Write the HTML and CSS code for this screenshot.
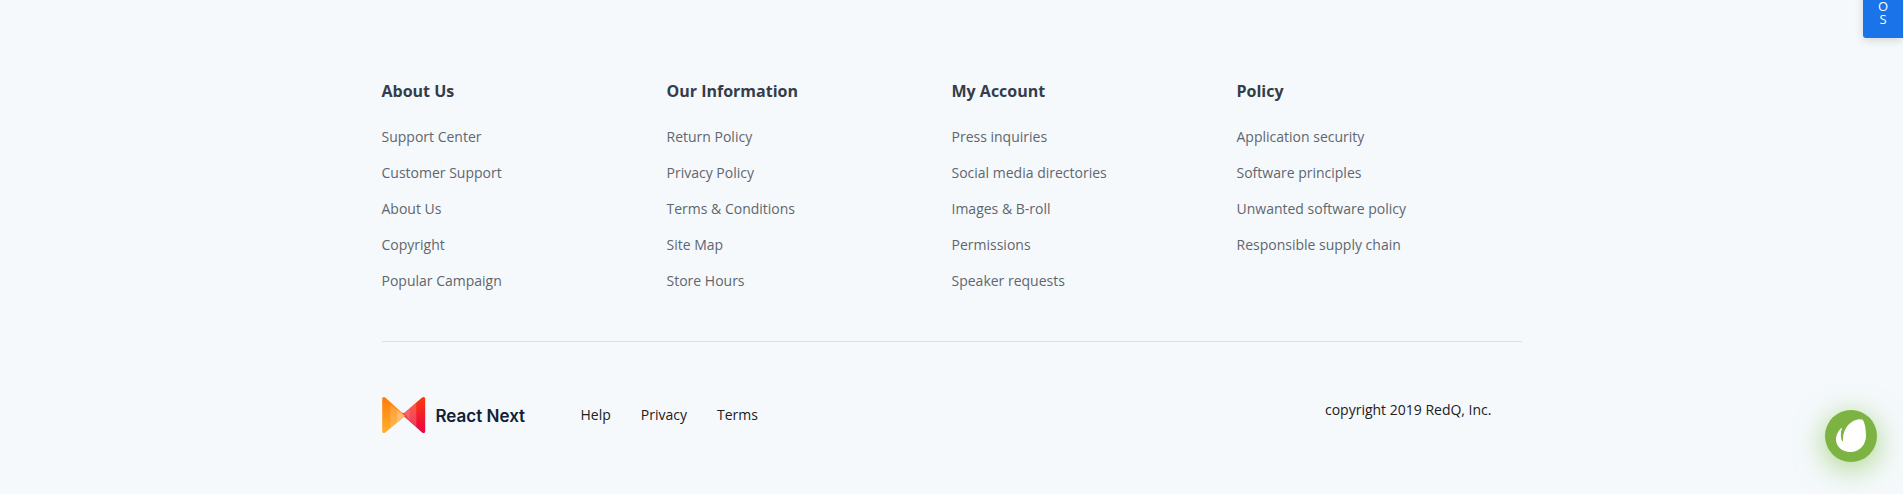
FILE: index.html
```html
<!DOCTYPE html>
<html lang="en">
<head>
<meta charset="utf-8">
<title>React Next</title>
<link rel="stylesheet" href="styles.css">
</head>
<body>
<footer class="footer">
  <div class="columns">
    <section class="column">
      <h3 class="title">About Us</h3>
      <ul class="links"><li>Support Center</li><li>Customer Support</li><li>About Us</li><li>Copyright</li><li>Popular Campaign</li></ul>
    </section>
    <section class="column">
      <h3 class="title">Our Information</h3>
      <ul class="links"><li>Return Policy</li><li>Privacy Policy</li><li>Terms &amp; Conditions</li><li>Site Map</li><li>Store Hours</li></ul>
    </section>
    <section class="column">
      <h3 class="title">My Account</h3>
      <ul class="links"><li>Press inquiries</li><li>Social media directories</li><li>Images &amp; B-roll</li><li>Permissions</li><li>Speaker requests</li></ul>
    </section>
    <section class="column">
      <h3 class="title">Policy</h3>
      <ul class="links"><li>Application security</li><li>Software principles</li><li>Unwanted software policy</li><li>Responsible supply chain</li></ul>
    </section>
  </div>
  <div class="bottom">
    <div class="brand">
      <svg class="mark" width="44" height="36" viewBox="0 0 44 36">
        <defs>
          <linearGradient id="warm" x1="0" y1="0" x2="0" y2="1"><stop offset="0" stop-color="#ff7a0a"/><stop offset="1" stop-color="#ffb02b"/></linearGradient>
          <linearGradient id="hot" x1="0" y1="0" x2="0" y2="1"><stop offset="0" stop-color="#fb3a0c"/><stop offset="1" stop-color="#ea0347"/></linearGradient>
        </defs>
        <path fill="url(#hot)" d="M43.200 1.600v32.800q0 1.600-1.600 1.600-.8 0-1.500-.6L18 15.800 21.500 16.500 40.100.6q.7-.6 1.500-.6 1.600 0 1.600 1.600z"/>
        <path fill="url(#warm)" d="M.2 1.600v32.800Q.2 36 1.800 36q.8 0 1.500-.6L23.300 18.800 3.300.6Q2.600 0 1.800 0 .2 0 .2 1.600z"/>
        <path fill="#fff" fill-opacity=".17" d="M8.300 7.500v23.300L22.800 18.800 8.300 7.500z"/>
        <path fill="#fff" fill-opacity=".25" d="M15.200 13.200v12.200l7.800-6.600z"/>
        <path fill="#fff" fill-opacity=".2" d="M34.300 5.600v24.300L21 17z"/>
        <path fill="#fff" fill-opacity=".12" d="M28 11.200v13.200L21 17z"/>
        <path fill="#e90b1c" d="M19.500 15.300 21.800 16.500l7.400 8.500-5.900-6.200z"/>
      </svg>
      <span class="name">React Next</span>
    </div>
    <nav class="menu"><span>Help</span><span>Privacy</span><span>Terms</span></nav>
    <p class="copyright">copyright 2019 RedQ, Inc.</p>
  </div>
</footer>
<div class="demos"><span>O</span><span>S</span></div>
<div class="envato">
  <svg width="30" height="34" viewBox="0 0 30 34"><path fill="#fff" d="M26.600.7C25.400-.1 22.200 0 18.400 1.400 11.800 4.200 7 11.500 7 19.800c0 1.500.4 2.400-.5 2.400C4.800 20.500 4.200 15 5.800 9.400c.2-.8-.4-.7-.8-.2C1.800 12.300 0 16.500 0 20.200 0 27.700 6.300 33 14.300 33 23.600 33 30 26 30 16.500 30 10.800 28.600 2.300 26.600.7z"/></svg>
</div>
</body>
</html>
```
FILE: styles.css
```css
* { box-sizing: border-box; }
body { margin: 0; height: 494px; overflow: hidden; background: #f5f9fc; font-family: "Open Sans", sans-serif; font-size: 14px; }
.footer { width: 1140px; margin: 0 auto; padding-top: 80px; }
.columns { display: grid; grid-template-columns: repeat(4, 285px); height: 261px; }
.title { margin: 0 0 24px; font-size: 16px; line-height: 22px; font-weight: 700; color: #343d48; }
.links { margin: -1px 0 0; padding: 0; list-style: none; display: flex; flex-direction: column; gap: 12px; color: #5f666e; line-height: 24px; }
.bottom { display: flex; align-items: flex-start; border-top: 1px solid #d9e0e6; padding-top: 55px; color: #20201d; line-height: 20px; }
.brand { display: flex; align-items: center; width: 199px; height: 36px; }
.mark { display: block; flex: none; }
.name { margin: 1px 0 0 10px; font: 600 17px/24px Inter, sans-serif; color: #0f2137; white-space: nowrap; }
.menu { display: flex; gap: 30px; padding-top: 8px; }
.copyright { margin: 3px 30px 0 auto; }
.demos { position: absolute; top: -100px; right: 0; width: 40px; height: 138px; padding-bottom: 12px; display: flex; flex-direction: column; justify-content: flex-end; align-items: center; background: #1a73e8; border-radius: 3px 0 0 3px; box-shadow: 0 2px 10px rgba(0,0,0,.15); color: #fff; font-size: 13px; line-height: 13px; }
.envato { position: absolute; left: 1825px; top: 410px; width: 52px; height: 52px; border-radius: 50%; background: #7cb342; display: flex; align-items: center; justify-content: center; box-shadow: 0 6px 30px rgba(124,190,66,.65); }
```
